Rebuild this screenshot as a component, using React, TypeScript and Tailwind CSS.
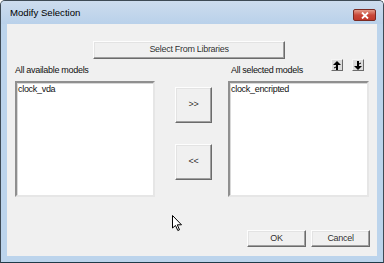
import React from "react";

const font = { fontFamily: '"Liberation Sans", Arial, sans-serif' };

const Btn = ({ children, className = "" }: { children?: React.ReactNode; className?: string }) => (
  <div
    className={`flex items-center justify-center bg-[#f0f0f0] border border-t-[#fdfdfd] border-l-[#fdfdfd] border-r-[#6b6b6b] border-b-[#6b6b6b] shadow-[inset_-1px_-1px_0_#a0a0a0,inset_1px_1px_0_#e3e3e3] text-[9px] tracking-[-0.3px] text-[#111]/90 ${className}`}
  >
    {children}
  </div>
);

const ListBox = ({ item }: { item: string }) => (
  <div className="w-full h-[116px] bg-white border-2 border-t-[#8f8f8f] border-l-[#8f8f8f] border-r-[#e6e6e6] border-b-[#e6e6e6] shadow-[inset_1px_1px_0_#d8d8d8] px-[1px] text-[9px] tracking-[-0.3px] leading-[12px] text-[#111]">
    {item}
  </div>
);

const Arrow = ({ down = false }: { down?: boolean }) => (
  <svg width="8" height="9" viewBox="0 0 8 9" className={down ? "rotate-180" : ""}>
    <path d="M4 0 L8 4 L5 4 L5 9 L3 9 L3 4 L0 4 Z" fill="#000" />
    <path d="M3 6 L1 7" stroke="#000" strokeWidth="1" />
  </svg>
);

const SmallBtn = ({ down = false }: { down?: boolean }) => (
  <div className="w-[12px] h-[12px] flex items-center justify-center bg-[#dcdcdc] border border-t-[#f5f5f5] border-l-[#f5f5f5] border-r-[#6b6b6b] border-b-[#6b6b6b]">
    <Arrow down={down} />
  </div>
);

export default function App() {
  return (
    <div className="relative w-[384px] h-[263px] bg-white" style={font}>
      <div className="w-[384px] h-[263px] flex flex-col border border-[#3e4a55] border-b-[#1f3a48] bg-[#bcd4ec] rounded-t-[5px] overflow-hidden">
        {/* title bar */}
        <div className="h-[23px] flex items-start justify-between bg-gradient-to-b from-[#cddcee] to-[#b9d1ea] pl-[9px] pr-[7px]">
          <span className="mt-[6px] text-[9.6px] leading-[12px] text-black">Modify Selection</span>
          <div className="mt-[8px] w-[23px] h-[12px] rounded-[2px] border border-[#7a2a22] bg-gradient-to-b from-[#e49a8a] via-[#c9483a] to-[#c0392b] flex items-center justify-center">
            <svg width="8" height="7" viewBox="0 0 8 7">
              <path d="M1 0.5 L7 6.5 M7 0.5 L1 6.5" stroke="#fff" strokeWidth="1.8" />
            </svg>
          </div>
        </div>

        {/* client area */}
        <div className="mx-[6px] h-[232px] bg-[#f0f0f0] flex flex-col pt-[17px]">
          <Btn className="ml-[86px] w-[192px] h-[18px]">Select From Libraries</Btn>

          <div className="flex pl-[8px]">
            <div className="w-[140px] flex flex-col">
              <div className="h-[22px] pt-[4px] text-[9px] tracking-[-0.3px] leading-[14px] text-[#111]">All available models</div>
              <ListBox item="clock_vda" />
            </div>

            <div className="w-[37px] ml-[20px] flex flex-col pt-[28px] gap-[21px]">
              <Btn className="h-[36px]">&gt;&gt;</Btn>
              <Btn className="h-[36px]">&lt;&lt;</Btn>
            </div>

            <div className="w-[141px] ml-[16px] flex flex-col">
              <div className="h-[22px] flex items-start">
                <span className="pt-[4px] pl-[3px] text-[9px] tracking-[-0.3px] leading-[14px] text-[#111]">All selected models</span>
                <div className="ml-auto mr-[5px] flex gap-[9px]">
                  <SmallBtn />
                  <SmallBtn down />
                </div>
              </div>
              <ListBox item="clock_encripted" />
            </div>
          </div>

          <div className="flex justify-end gap-[5px] pr-[7px] mt-[33px]">
            <Btn className="w-[59px] h-[17px]">OK</Btn>
            <Btn className="w-[59px] h-[17px]">Cancel</Btn>
          </div>
        </div>
      </div>

      {/* mouse cursor */}
      <svg className="absolute left-[172px] top-[215px]" width="11" height="17" viewBox="0 0 11 17">
        <path d="M0.5 0.5 L0.5 13 L3.5 10.5 L5.8 15.5 L7.5 14.8 L5.3 9.8 L9.5 9.8 Z" fill="#fff" stroke="#000" strokeWidth="1" strokeLinejoin="round" />
      </svg>
    </div>
  );
}
